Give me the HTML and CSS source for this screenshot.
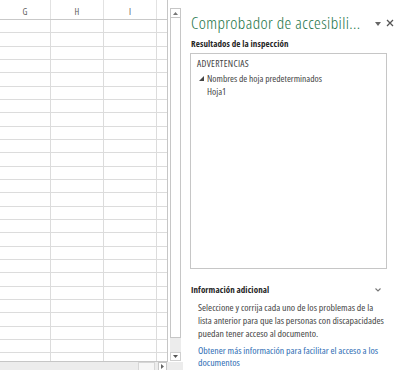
FILE: index.html
```html
<!DOCTYPE html>
<html lang="es">
<head>
<meta charset="utf-8">
<title>Comprobador de accesibilidad</title>
<link rel="stylesheet" href="styles.css">
</head>
<body>
<div class="sheet">
  <div class="sheet-main">
    <div class="grid">
      <div class="hdr">
        <div class="hc c1">G</div>
        <div class="hc c2">H</div>
        <div class="hc c3">I</div>
        <div class="hc c4"></div>
      </div>
      <div class="rows">
        <div class="row"><div class="cell c1"></div><div class="cell c2"></div><div class="cell c3"></div><div class="cell c4"></div></div>
        <div class="row"><div class="cell c1"></div><div class="cell c2"></div><div class="cell c3"></div><div class="cell c4"></div></div>
        <div class="row"><div class="cell c1"></div><div class="cell c2"></div><div class="cell c3"></div><div class="cell c4"></div></div>
        <div class="row"><div class="cell c1"></div><div class="cell c2"></div><div class="cell c3"></div><div class="cell c4"></div></div>
        <div class="row"><div class="cell c1"></div><div class="cell c2"></div><div class="cell c3"></div><div class="cell c4"></div></div>
        <div class="row"><div class="cell c1"></div><div class="cell c2"></div><div class="cell c3"></div><div class="cell c4"></div></div>
        <div class="row"><div class="cell c1"></div><div class="cell c2"></div><div class="cell c3"></div><div class="cell c4"></div></div>
        <div class="row"><div class="cell c1"></div><div class="cell c2"></div><div class="cell c3"></div><div class="cell c4"></div></div>
        <div class="row"><div class="cell c1"></div><div class="cell c2"></div><div class="cell c3"></div><div class="cell c4"></div></div>
        <div class="row"><div class="cell c1"></div><div class="cell c2"></div><div class="cell c3"></div><div class="cell c4"></div></div>
        <div class="row"><div class="cell c1"></div><div class="cell c2"></div><div class="cell c3"></div><div class="cell c4"></div></div>
        <div class="row"><div class="cell c1"></div><div class="cell c2"></div><div class="cell c3"></div><div class="cell c4"></div></div>
        <div class="row"><div class="cell c1"></div><div class="cell c2"></div><div class="cell c3"></div><div class="cell c4"></div></div>
        <div class="row"><div class="cell c1"></div><div class="cell c2"></div><div class="cell c3"></div><div class="cell c4"></div></div>
        <div class="row"><div class="cell c1"></div><div class="cell c2"></div><div class="cell c3"></div><div class="cell c4"></div></div>
        <div class="row"><div class="cell c1"></div><div class="cell c2"></div><div class="cell c3"></div><div class="cell c4"></div></div>
        <div class="row"><div class="cell c1"></div><div class="cell c2"></div><div class="cell c3"></div><div class="cell c4"></div></div>
        <div class="row"><div class="cell c1"></div><div class="cell c2"></div><div class="cell c3"></div><div class="cell c4"></div></div>
        <div class="row"><div class="cell c1"></div><div class="cell c2"></div><div class="cell c3"></div><div class="cell c4"></div></div>
        <div class="row"><div class="cell c1"></div><div class="cell c2"></div><div class="cell c3"></div><div class="cell c4"></div></div>
        <div class="row"><div class="cell c1"></div><div class="cell c2"></div><div class="cell c3"></div><div class="cell c4"></div></div>
        <div class="row"><div class="cell c1"></div><div class="cell c2"></div><div class="cell c3"></div><div class="cell c4"></div></div>
        <div class="row"><div class="cell c1"></div><div class="cell c2"></div><div class="cell c3"></div><div class="cell c4"></div></div>
        <div class="row"><div class="cell c1"></div><div class="cell c2"></div><div class="cell c3"></div><div class="cell c4"></div></div>
        <div class="row"><div class="cell c1"></div><div class="cell c2"></div><div class="cell c3"></div><div class="cell c4"></div></div>
        <div class="row last"><div class="cell c1"></div><div class="cell c2"></div><div class="cell c3"></div><div class="cell c4"></div></div>
      </div>
    </div>
    <div class="vscroll">
      <div class="vbtn up"><svg width="5" height="3" viewBox="0 0 5 3"><path d="M0 3 L2.5 0 L5 3 Z" fill="#777"/></svg></div>
      <div class="vthumb"></div>
      <div class="vtrack"></div>
      <div class="vbtn down"><svg width="5" height="3" viewBox="0 0 5 3"><path d="M0 0 L2.5 3 L5 0 Z" fill="#555"/></svg></div>
    </div>
  </div>
  <div class="hscroll">
    <div class="htrack"></div>
    <div class="hthumb"></div>
    <div class="hbtn"><svg width="3" height="5" viewBox="0 0 3 5"><path d="M0 0 L3 2.5 L0 5 Z" fill="#666"/></svg></div>
  </div>
</div>

<aside class="pane">
  <div class="pane-head">
    <h1 class="pane-title">Comprobador de accesibili...</h1>
    <span class="pane-menu"><svg width="6" height="4" viewBox="0 0 6 4"><path d="M0 0 L6 0 L3 4 Z" fill="#666"/></svg></span>
    <span class="pane-close"><svg width="8" height="8" viewBox="0 0 8 8"><path d="M1 1 L7 7 M7 1 L1 7" stroke="#555" stroke-width="1.3"/></svg></span>
  </div>
  <h2 class="section-label">Resultados de la inspección</h2>
  <div class="results">
    <div class="results-cat">ADVERTENCIAS</div>
    <div class="results-item">
      <svg class="tri" width="5" height="5" viewBox="0 0 5 5"><path d="M5 0 L5 5 L0 5 Z" fill="#444"/></svg>
      <span>Nombres de hoja predeterminados</span>
    </div>
    <div class="results-sub">Hoja1</div>
  </div>
  <div class="info-head">
    <h2 class="section-label">Información adicional</h2>
    <svg class="chev" width="6" height="4" viewBox="0 0 6 4"><path d="M0.5 0.5 L3 3 L5.5 0.5" fill="none" stroke="#777" stroke-width="1.1"/></svg>
  </div>
  <p class="info-text">Seleccione y corrija cada uno de los problemas de la lista anterior para que las personas con discapacidades puedan tener acceso al documento.</p>
  <a class="info-link" href="#">Obtener más información para facilitar el acceso a los documentos</a>
</aside>
</body>
</html>
```

FILE: styles.css
```css
html, body {
  margin: 0;
  padding: 0;
}
body {
  width: 400px;
  height: 370px;
  overflow: hidden;
  display: flex;
  background: #fff;
  font-family: "Open Sans", "Noto Sans", sans-serif;
  font-stretch: 75%;
  color: #444;
}

/* ---------- spreadsheet ---------- */
.sheet {
  width: 183px;
  display: flex;
  flex-direction: column;
}
.sheet-main {
  flex: 1;
  display: flex;
  min-height: 0;
}
.grid {
  width: 167px;
  border-right: 1px solid #c6c6c6;
  display: flex;
  flex-direction: column;
  overflow: hidden;
  border-bottom: 1px solid #c6c6c6;
}
.hdr {
  display: flex;
  height: 19px;
  border-bottom: 1px solid #c9c9c9;
  flex-shrink: 0;
}
.hc {
  box-sizing: border-box;
  border-right: 1px solid #e2e2e2;
  font-size: 9px;
  line-height: 12px;
  padding-top: 6px;
  text-align: center;
  color: #5a5a5a;
}
.c1 { width: 51px; }
.c2 { width: 53px; }
.c3 { width: 53px; }
.c4 { flex: 1; border-right: 0; }
.rows {
  flex: 1;
  overflow: hidden;
}
.row {
  display: flex;
  height: 13.33px;
  box-sizing: border-box;
  border-bottom: 1px solid #dcdcdc;
}
.row.last { border-bottom: 0; }
.cell {
  box-sizing: border-box;
  border-right: 1px solid #dcdcdc;
}
.cell.c4 { border-right: 0; }

.vscroll {
  width: 15px;
  display: flex;
  flex-direction: column;
  padding: 8px 0 1px 2px;
  box-sizing: border-box;
}
.vbtn {
  width: 11px;
  height: 9px;
  box-sizing: border-box;
  border: 1px solid #c6c6c6;
  display: flex;
  align-items: center;
  justify-content: center;
  background: #fff;
}
.vbtn.up { border-bottom: 0; }
.vthumb {
  flex: 1;
  width: 11px;
  box-sizing: border-box;
  border: 1px solid #c6c6c6;
  background: #fff;
}
.vtrack {
  height: 14px;
  width: 11px;
  background: #ececec;
}
.vbtn.down {
  height: 9px;
  border-color: #d0d0d0;
}

.hscroll {
  height: 8px;
  display: flex;
  background: #ececec;
  padding-right: 16px;
}
.htrack { flex: 1; }
.hthumb {
  width: 15px;
  margin-right: 3px;
  background: #f6f6f6;
  border: 1px solid #d6d6d6;
  border-bottom: 0;
}
.hbtn {
  width: 9px;
  box-sizing: border-box;
  border: 1px solid #c6c6c6;
  border-bottom: 0;
  background: #fff;
  display: flex;
  align-items: center;
  justify-content: center;
}

/* ---------- task pane ---------- */
.pane {
  flex: 1;
  padding: 12px 6px 0 7px;
  display: flex;
  flex-direction: column;
}
.pane-head {
  display: flex;
  align-items: center;
  height: 22px;
}
.pane-title {
  margin: 0 0 0 1px;
  flex: 1;
  font-size: 17px;
  font-weight: 300;
  letter-spacing: 0.4px;
  line-height: 22px;
  color: #217346;
  white-space: nowrap;
}
.pane-menu {
  display: flex;
  margin-top: 2px;
  margin-right: 5px;
}
.pane-close {
  display: flex;
  margin-right: 0;
}
.section-label {
  margin: 4px 0 0 1px;
  font-size: 9px;
  font-weight: 700;
  letter-spacing: 0.1px;
  line-height: 12px;
  color: #262626;
}
.results {
  margin: 3px 7px 0 0;
  height: 219px;
  box-sizing: border-box;
  border: 1px solid #c6c6c6;
  padding: 3px 6px 0 6px;
  font-size: 9.5px;
  line-height: 13px;
  color: #444;
}
.results-cat {
  letter-spacing: 0.3px;
}
.results-item {
  display: flex;
  align-items: center;
  gap: 3px;
  margin-left: 2px;
  margin-top: 2px;
}
.results-sub {
  padding-left: 10px;
}
.info-head {
  display: flex;
  align-items: center;
  justify-content: space-between;
  margin-top: 15px;
  padding-right: 13px;
}
.info-head .section-label {
  margin-top: 0;
}
.info-text {
  margin: 6px 0 0 8px;
  width: 190px;
  font-size: 9.8px;
  line-height: 12.7px;
  color: #444;
}
.info-link {
  margin: 4px 0 0 8px;
  width: 192px;
  font-size: 9.8px;
  line-height: 12.7px;
  color: #2e6db4;
  text-decoration: none;
}
```
